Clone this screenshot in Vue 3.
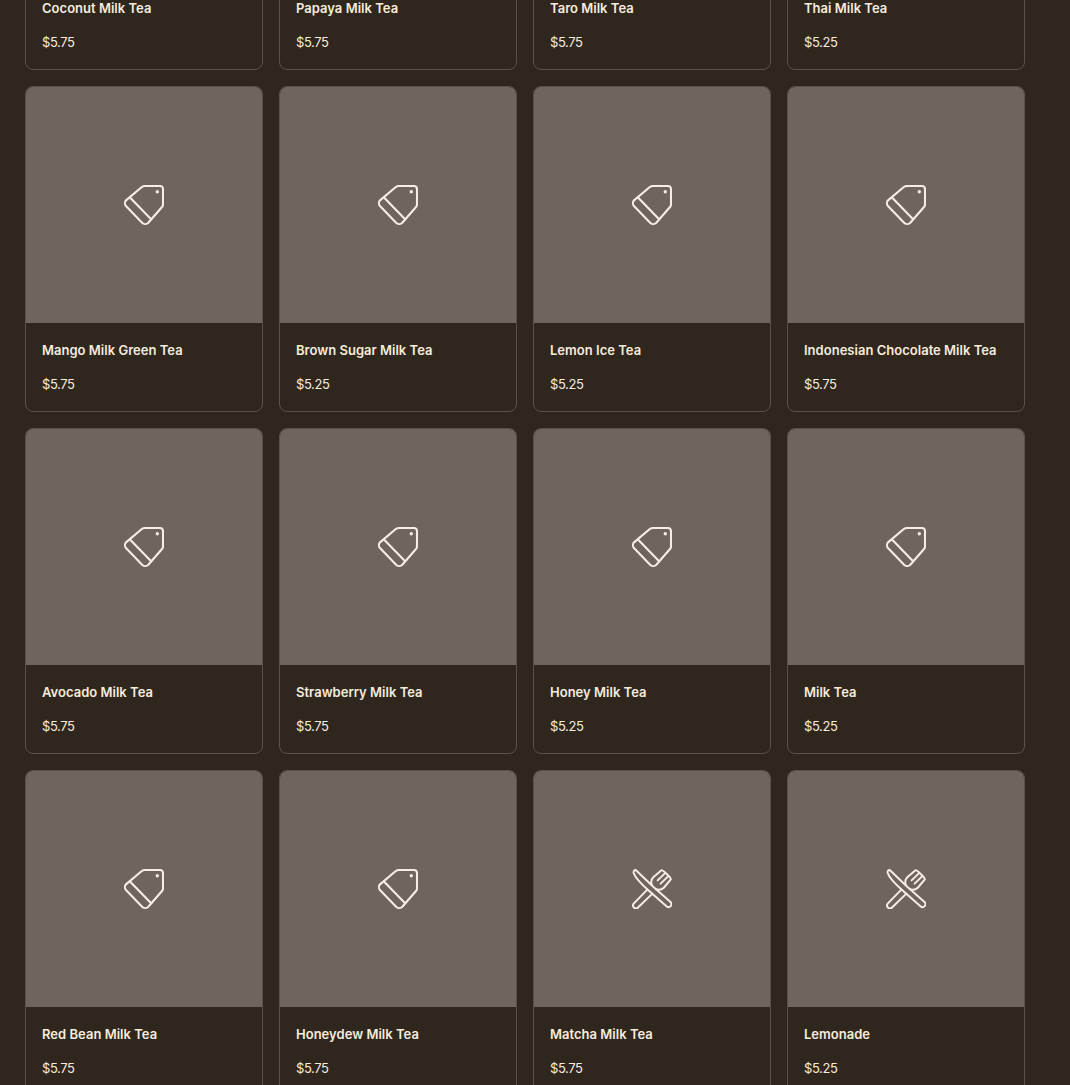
<script setup>
const items = [
  ['Coconut Milk Tea', '$5.75', 'tag'], ['Papaya Milk Tea', '$5.75', 'tag'], ['Taro Milk Tea', '$5.75', 'tag'], ['Thai Milk Tea', '$5.25', 'tag'],
  ['Mango Milk Green Tea', '$5.75', 'tag'], ['Brown Sugar Milk Tea', '$5.25', 'tag'], ['Lemon Ice Tea', '$5.25', 'tag'], ['Indonesian Chocolate Milk Tea', '$5.75', 'tag'],
  ['Avocado Milk Tea', '$5.75', 'tag'], ['Strawberry Milk Tea', '$5.75', 'tag'], ['Honey Milk Tea', '$5.25', 'tag'], ['Milk Tea', '$5.25', 'tag'],
  ['Red Bean Milk Tea', '$5.75', 'tag'], ['Honeydew Milk Tea', '$5.75', 'tag'], ['Matcha Milk Tea', '$5.75', 'food'], ['Lemonade', '$5.25', 'food'],
]
</script>

<template>
  <div class="page">
    <div class="grid">
      <div v-for="item in items" :key="item[0]" class="card">
        <div class="thumb">
          <svg v-if="item[2] === 'tag'" class="icon" viewBox="0 0 40 40" fill="none" stroke="currentColor" stroke-width="2.1" stroke-linejoin="round" stroke-linecap="round">
            <path d="M21 1H36a3 3 0 0 1 3 3V19.5a4 4 0 0 1-1.2 2.8L24.3 37.7a4.4 4.4 0 0 1-6.2 0L2.2 21.3a4.4 4.4 0 0 1 .1-6.2L17.5 2.3A5.5 5.5 0 0 1 21 1Z" />
            <path d="M6 12.6 26.4 33.5" />
            <circle cx="33.3" cy="6.7" r="1.7" fill="currentColor" stroke="none" />
          </svg>
          <svg v-else class="icon" viewBox="0 0 40 40" fill="none" stroke="currentColor" stroke-width="2" stroke-linejoin="round" stroke-linecap="round">
            <path d="M4 1.2 21.5 18 38.5 33a2.9 2.9 0 0 1-4 4.3L18 22.8C11 16.5 3.5 10 1.7 4 1.3 2.3 2.5.6 4 1.2Z" />
            <path d="M15.3 20.6 1.9 34.4a2.9 2.9 0 0 0 4.1 4.1L20.4 24.6" />
            <path d="M19.8 15.9C18.6 12.6 19.8 9.7 21.5 8L29.5 1.2C30.5.6 39.4 9 38.8 10.4L32 18.5C30 20.5 27 21.3 24 20.2" />
            <path d="M25.6 11.4 32.6 4.6M28.6 14.6 35.8 7.6" />
          </svg>
        </div>
        <div class="body">
          <div class="name">{{ item[0] }}</div>
          <div class="price">{{ item[1] }}</div>
        </div>
      </div>
    </div>
  </div>
</template>

<style>
html, body { margin: 0; overflow: hidden; background: #2f261e; }
</style>

<style scoped>
.page {
  height: 1085px;
  overflow: hidden;
  background: #2f261e;
  font-family: Inter, "Liberation Sans", sans-serif;
}
.grid {
  display: grid;
  grid-template-columns: repeat(4, 238px);
  gap: 16px;
  padding-left: 25px;
  margin-top: -256px;
}
.card {
  box-sizing: border-box;
  height: 326px;
  border: 1px solid #5b5149;
  border-radius: 8px;
  overflow: hidden;
}
.thumb {
  height: 236px;
  background: #6e655e;
  display: flex;
  align-items: center;
  justify-content: center;
  color: #f6eee2;
}
.icon { width: 40px; height: 40px; display: block; }
.body {
  padding: 17px 16px 0;
  display: flex;
  flex-direction: column;
  gap: 14px;
}
.name {
  font-size: 13px;
  line-height: 20px;
  font-weight: 600;
  letter-spacing: 0.02px;
  color: #f6ecdc;
  white-space: nowrap;
}
.price {
  font-size: 13px;
  line-height: 20px;
  font-weight: 400;
  letter-spacing: -0.4px;
  color: #f6ecdc;
}
</style>
